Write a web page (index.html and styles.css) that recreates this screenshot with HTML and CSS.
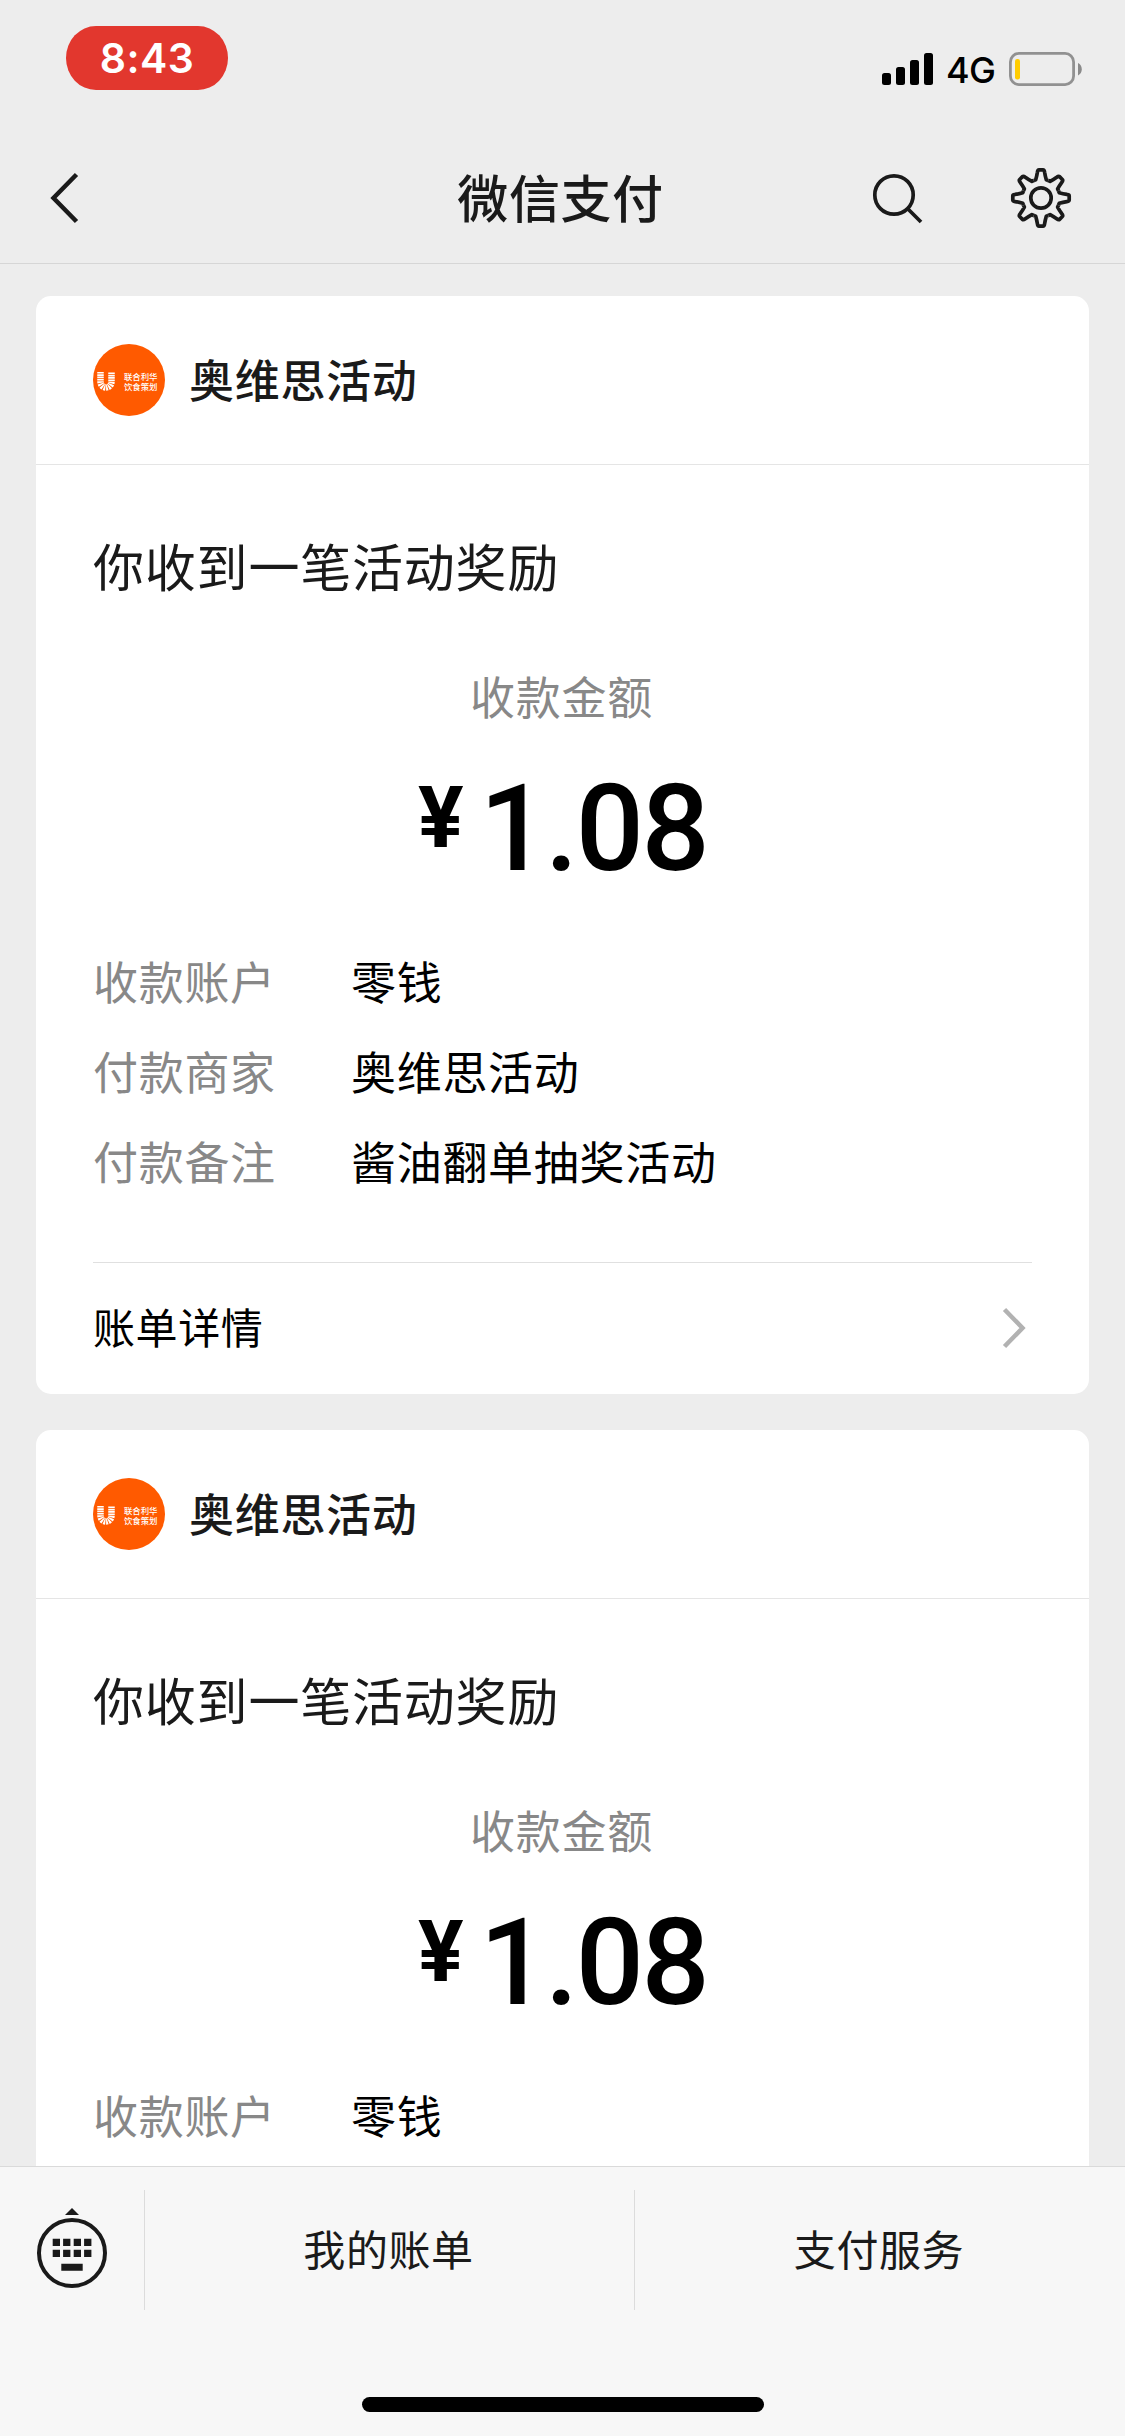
FILE: index.html
```html
<!DOCTYPE html>
<html lang="zh-CN">
<head>
<meta charset="utf-8">
<title>微信支付</title>
<link rel="stylesheet" href="styles.css">
</head>
<body>
<div class="screen">
  <header class="top">
    <div class="status">
      <span class="clock">8:43</span>
      <div class="status-right">
        <svg class="signal" width="51" height="32" viewBox="0 0 51 32"><rect x="0" y="20" width="9" height="12" rx="2.5"/><rect x="14" y="14" width="9" height="18" rx="2.5"/><rect x="28" y="7" width="9" height="25" rx="2.5"/><rect x="42" y="0" width="9" height="32" rx="2.5"/></svg>
        <span class="network">4G</span>
        <svg class="battery" width="73" height="34" viewBox="0 0 73 34"><rect x="1.4" y="1.4" width="63.2" height="31.2" rx="8.5" fill="none" stroke="#919191" stroke-width="2.8"/><rect x="6" y="7" width="5" height="20.5" rx="2.2" fill="#fc0"/><path d="M69 11a7 7 0 0 1 0 12.4z" fill="#8a8a8a"/></svg>
      </div>
    </div>
    <nav class="nav">
      <svg class="back" width="30" height="54" viewBox="0 0 30 54"><path d="M27.500 3.500 4.500 27l23 23.500"/></svg>
      <h1 class="title">微信支付</h1>
      <div class="actions">
        <svg class="line-icon" width="52" height="52" viewBox="0 0 52 52"><circle cx="22" cy="23" r="19.200"/><path d="m36 37 13 13"/></svg>
        <svg class="line-icon" width="62" height="62" viewBox="-31 -31 62 62">
          <defs><path id="tooth" d="M-7.25-17.500-5.300-18.200Q-4.200-22-3.600-25.800-3.300-28.200-2-28.200H2Q3.300-28.200 3.600-25.800 4.200-22 5.300-18.200L7.250-17.500"/></defs>
          <circle r="10.200"/>
          <use href="#tooth"/><use href="#tooth" transform="rotate(45)"/><use href="#tooth" transform="rotate(90)"/><use href="#tooth" transform="rotate(135)"/><use href="#tooth" transform="rotate(180)"/><use href="#tooth" transform="rotate(225)"/><use href="#tooth" transform="rotate(270)"/><use href="#tooth" transform="rotate(315)"/>
        </svg>
      </div>
    </nav>
  </header>

  <main class="feed">
    <article class="card">
      <header class="merchant">
        <div class="avatar">
          <svg class="mark" width="20" height="21" viewBox="0 0 20 21"><path d="M4.500 1v9.500a5.500 6 0 0 0 11 0V1"/></svg>
          <div class="brand"><span>联合利华</span><span>饮食策划</span></div>
        </div>
        <h2 class="merchant-name">奥维思活动</h2>
      </header>
      <div class="body">
        <p class="headline">你收到一笔活动奖励</p>
        <p class="amount-label">收款金额</p>
        <p class="amount"><span class="yen">¥</span><span class="sum">1.08</span></p>
        <dl class="facts">
          <dt>收款账户</dt><dd>零钱</dd>
          <dt>付款商家</dt><dd>奥维思活动</dd>
          <dt>付款备注</dt><dd>酱油翻单抽奖活动</dd>
        </dl>
        <div class="detail"><span>账单详情</span><svg class="chevron" width="24" height="42" viewBox="0 0 24 42"><path d="M2.500 2.500 20.500 21l-18 18.500"/></svg></div>
      </div>
    </article>

    <article class="card">
      <header class="merchant">
        <div class="avatar">
          <svg class="mark" width="20" height="21" viewBox="0 0 20 21"><path d="M4.500 1v9.500a5.500 6 0 0 0 11 0V1"/></svg>
          <div class="brand"><span>联合利华</span><span>饮食策划</span></div>
        </div>
        <h2 class="merchant-name">奥维思活动</h2>
      </header>
      <div class="body">
        <p class="headline">你收到一笔活动奖励</p>
        <p class="amount-label">收款金额</p>
        <p class="amount"><span class="yen">¥</span><span class="sum">1.08</span></p>
        <dl class="facts">
          <dt>收款账户</dt><dd>零钱</dd>
        </dl>
      </div>
    </article>
  </main>

  <footer class="bottom">
    <div class="menu">
      <div class="keyboard">
        <svg width="72" height="82" viewBox="0 0 72 82"><path d="m36 1 7 7H29z"/><circle cx="36" cy="46" r="33" fill="none" stroke="#1a1a1a" stroke-width="4"/><path d="M16.700 31.700h7.300v7.300h-7.300zM27.100 31.700h7.300v7.300h-7.300zM37.700 31.700h7.300v7.300h-7.300zM48.100 31.700h7.300v7.300h-7.300zM16.700 42.700h7.300v7.300h-7.300zM27.100 42.700h7.300v7.300h-7.300zM37.700 42.700h7.300v7.300h-7.300zM48.100 42.700h7.300v7.300h-7.300zM25.300 56.700h21.400v7H25.300z"/></svg>
      </div>
      <div class="menu-item">我的账单</div>
      <div class="menu-item">支付服务</div>
    </div>
    <div class="home-bar"></div>
  </footer>
</div>
</body>
</html>
```
FILE: styles.css
```css
* { box-sizing: border-box; margin: 0; padding: 0; }
body { background: #ededed; font-family: "Noto Sans CJK SC", sans-serif; color: #1a1a1a; }
svg { display: block; flex: none; }
.screen { width: 1125px; height: 2436px; display: flex; flex-direction: column; overflow: hidden; }

.top { flex: none; height: 264px; border-bottom: 1px solid #d6d6d6; display: flex; flex-direction: column; }
.status { height: 132px; padding: 26px 43px 0 66px; display: flex; justify-content: space-between; align-items: flex-start; }
.clock { width: 162px; height: 64px; border-radius: 30px / 32px; background: #e2372e; color: #fff; font: 600 41px/64px Inter, sans-serif; text-align: center; letter-spacing: .5px; }
.status-right { display: flex; align-items: flex-start; padding-top: 26px; color: #000; }
.signal { margin-top: 1px; }
.network { font: 500 36px/34px Inter, sans-serif; margin: 1px 14px 0 13px; width: 49px; white-space: nowrap; letter-spacing: -.6px; }
.nav { height: 132px; display: grid; grid-template-columns: 1fr auto 1fr; align-items: center; padding: 1px 53px 0 49px; }
.back path { fill: none; stroke: #1a1a1a; stroke-width: 4.500; }
.title { font-size: 51px; line-height: 74px; font-weight: 500; letter-spacing: .6px; padding-bottom: 4px; }
.actions { display: flex; justify-content: flex-end; align-items: center; gap: 86px; }
.line-icon { fill: none; stroke: #1a1a1a; stroke-width: 3.700; stroke-linejoin: round; }

.feed { flex: 1; min-height: 0; overflow: hidden; padding: 32px 36px 0; display: flex; flex-direction: column; gap: 36px; }
.card { flex: none; height: 1098px; background: #fff; border-radius: 15px; }
.merchant { height: 169px; border-bottom: 1px solid #e5e5e5; padding: 0 57px; display: flex; align-items: center; gap: 24px; }
.avatar { width: 72px; height: 72px; border-radius: 50%; background: #ff5a00; display: flex; align-items: center; padding: 2px 0 0 3px; gap: 8px; }
.mark path { fill: none; stroke: #fff; stroke-width: 6.500; stroke-dasharray: 1.600 .7; }
.brand { display: flex; flex-direction: column; color: #fff; font-size: 8.400px; font-weight: 500; line-height: 10px; white-space: nowrap; }
.merchant-name { font-size: 45px; line-height: 66px; font-weight: 500; letter-spacing: .7px; padding-bottom: 3px; }
.body { padding: 0 57px; display: flex; flex-direction: column; }
.headline { margin-top: 63px; font-size: 51px; line-height: 74px; letter-spacing: .8px; }
.amount-label { margin-top: 61px; margin-right: 2px; font-size: 45px; line-height: 66px; letter-spacing: .7px; text-align: center; color: #888; }
.amount { margin-top: 40px; height: 120px; display: flex; justify-content: center; align-items: flex-start; color: #000; font-family: Roboto, sans-serif; gap: 16px; }
.yen { font-size: 85px; line-height: 99px; font-weight: 700; }
.sum { font-size: 120px; line-height: 120px; font-weight: 500; letter-spacing: -2.600px; }
.facts { margin-top: 47px; display: grid; grid-template-columns: 258px 1fr; grid-auto-rows: 90px; font-size: 45px; line-height: 90px; letter-spacing: .7px; }
.facts dt { color: #888; }
.facts dd { color: #000; }
.detail { margin-top: 56px; height: 132px; border-top: 1px solid #e0e0e0; padding-bottom: 1px; display: flex; justify-content: space-between; align-items: center; font-size: 42px; line-height: 60px; letter-spacing: .6px; color: #000; }
.detail span { padding-bottom: 4px; }
.chevron { margin-right: 6px; }
.chevron path { fill: none; stroke: #b2b2b2; stroke-width: 4.500; }

.bottom { flex: none; height: 270px; border-top: 1px solid #dadada; background: #f7f7f7; display: flex; flex-direction: column; align-items: center; }
.menu { margin-top: 23px; width: 100%; height: 120px; display: grid; grid-template-columns: 144px 490px 1fr; }
.keyboard { display: flex; align-items: center; justify-content: center; padding-bottom: 4px; }
.keyboard svg { fill: #1a1a1a; }
.menu-item { border-left: 1px solid #dcdcdc; padding-right: 2px; font-size: 42px; line-height: 115px; text-align: center; letter-spacing: .6px; }
.home-bar { margin-top: 87px; width: 402px; height: 15px; border-radius: 8px; background: #000; }
```
